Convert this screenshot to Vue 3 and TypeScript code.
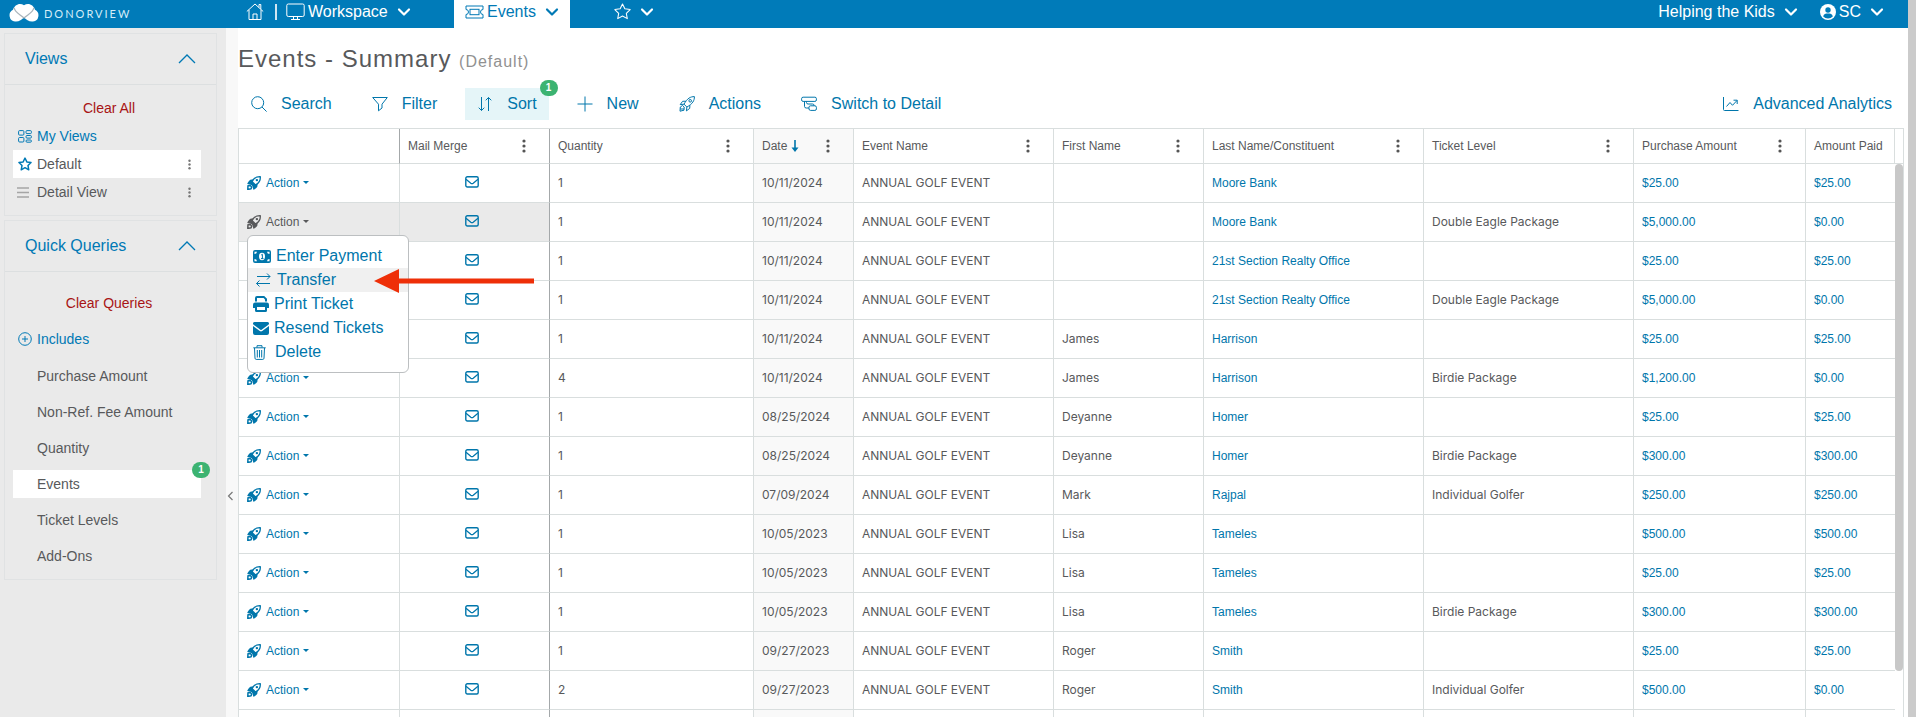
<script setup lang="ts">
import { ref } from 'vue'

interface Row {
  qty: number
  date: string
  first: string
  last: string
  level: string
  amount: string
  paid: string
}

const make = (
  qty: number, date: string, first: string, last: string, level: string, amount: string, paid: string,
): Row => ({ qty, date, first, last, level, amount, paid })

const rows: Row[] = [
  make(1, '10/11/2024', '', 'Moore Bank', '', '$25.00', '$25.00'),
  make(1, '10/11/2024', '', 'Moore Bank', 'Double Eagle Package', '$5,000.00', '$0.00'),
  make(1, '10/11/2024', '', '21st Section Realty Office', '', '$25.00', '$25.00'),
  make(1, '10/11/2024', '', '21st Section Realty Office', 'Double Eagle Package', '$5,000.00', '$0.00'),
  make(1, '10/11/2024', 'James', 'Harrison', '', '$25.00', '$25.00'),
  make(4, '10/11/2024', 'James', 'Harrison', 'Birdie Package', '$1,200.00', '$0.00'),
  make(1, '08/25/2024', 'Deyanne', 'Homer', '', '$25.00', '$25.00'),
  make(1, '08/25/2024', 'Deyanne', 'Homer', 'Birdie Package', '$300.00', '$300.00'),
  make(1, '07/09/2024', 'Mark', 'Rajpal', 'Individual Golfer', '$250.00', '$250.00'),
  make(1, '10/05/2023', 'Lisa', 'Tameles', '', '$500.00', '$500.00'),
  make(1, '10/05/2023', 'Lisa', 'Tameles', '', '$25.00', '$25.00'),
  make(1, '10/05/2023', 'Lisa', 'Tameles', 'Birdie Package', '$300.00', '$300.00'),
  make(1, '09/27/2023', 'Roger', 'Smith', '', '$25.00', '$25.00'),
  make(2, '09/27/2023', 'Roger', 'Smith', 'Individual Golfer', '$500.00', '$0.00'),
]

const openRow = ref(1)
const queries = ['Purchase Amount', 'Non-Ref. Fee Amount', 'Quantity', 'Events', 'Ticket Levels', 'Add-Ons']
const activeQuery = ref('Events')
</script>

<template>
  <div class="shell">
    <svg class="defs" aria-hidden="true">
      <symbol id="chev" viewBox="0 0 14 14"><path d="M2 4.5l5 5 5-5" fill="none" stroke="currentColor" stroke-width="2.2" stroke-linecap="round" stroke-linejoin="round" /></symbol>
      <symbol id="rocket" viewBox="0 0 16 16">
        <path d="M15.2.8C11.5.6 8.500 2 6.400 5.200L5.300 8.200l2.600 2.600 3-1.200C14.200 7.400 15.500 4.500 15.200.8z" fill="none" stroke="currentColor" stroke-width="1.500" stroke-linejoin="round" />
        <circle cx="11.300" cy="4.700" r="1.400" fill="currentColor" />
        <path d="M7.500 3.800 3.800 4.200C2.500 5 1 7.200.2 9l5.300 1.300z M12.200 8.500l-.4 3.700c-.8 1.300-2.600 2.800-4.600 3.600l-1.200-5.300z" fill="currentColor" />
        <path d="M6.500 6 10 9.500 7 12.200 4 9z" fill="currentColor" />
        <path d="M1.100 11.200 3.800 10.900l1.500 1.600-.6 2.100-3.800.8z" fill="none" stroke="currentColor" stroke-width="1.700" stroke-linejoin="round" />
      </symbol>
      <symbol id="mail" viewBox="0 0 14 12">
        <rect x=".8" y=".8" width="12.400" height="10.200" rx="1.500" fill="none" stroke="currentColor" stroke-width="1.400" />
        <path d="M1 3.300l4.800 3.900c.7.500 1.700.5 2.400 0L13 3.300" fill="none" stroke="currentColor" stroke-width="1.300" />
      </symbol>
      <symbol id="dots" viewBox="0 0 4 14"><circle cx="2" cy="2" r="1.600" /><circle cx="2" cy="7" r="1.600" /><circle cx="2" cy="12" r="1.600" /></symbol>
      <symbol id="star" viewBox="0 0 16 16"><path d="M8 .9l2.200 4.600 5 .7-3.600 3.500.9 5L8 12.300l-4.500 2.400.9-5L.8 6.200l5-.7z" fill="none" stroke="currentColor" stroke-linejoin="round" /></symbol>
    </svg>

    <header class="topbar">
      <a class="brand" href="#" aria-label="DonorView">
        <svg width="32" height="19" viewBox="0 0 32 19">
          <path d="M7 18.500A6.200 6.200 0 0 1 5 6.800C6.500 1.500 12 -.8 16 2.300c4-3.100 9.500-.8 11 4.500a6.200 6.200 0 0 1-2 11.700c-4 .4-6.500-1.500-9-4.200-2.500 2.700-5 4.600-9 4.200z" fill="#fff" />
          <path d="M6.200 4.800c.3 4.200 5.300 6.400 9.800 10.200 4.500-3.800 9.500-6 9.800-10.200" fill="none" stroke="#a9b4bb" stroke-width="1.300" />
        </svg>
        <span class="wordmark">DONORVIEW</span>
      </a>
      <nav class="mainnav">
        <a class="home" href="#" aria-label="Home">
          <svg width="18" height="18" viewBox="0 0 18 18" fill="none" stroke="currentColor"><path d="M.8 8.500 9 1l8.200 7.500M3 6.800V16.500h12V6.800M13 4.500V1.500h1.800v4.700M7 16.500V11h4v5.500" /></svg>
        </a>
        <span class="divider"></span>
        <button class="navbtn workspace" type="button">
          <svg width="19" height="18" viewBox="0 0 19 18" fill="none" stroke="currentColor"><rect x=".8" y="1" width="17.400" height="12.500" rx="1.500" /><path d="M7.500 13.500v3M11.500 13.500v3M5 16.500h9" /></svg>
          Workspace
          <svg class="chev" width="14" height="14"><use href="#chev" /></svg>
        </button>
        <button class="navbtn tab" type="button">
          <svg width="19" height="14" viewBox="0 0 19 14" fill="none" stroke="currentColor"><path d="M1 1h17v3.500a2.500 2.500 0 0 0 0 5V13H1V9.500a2.500 2.500 0 0 0 0-5z" stroke-linejoin="round" /><rect x="5" y="4.300" width="9" height="5.400" /></svg>
          Events
          <svg class="chev" width="14" height="14"><use href="#chev" /></svg>
        </button>
        <button class="navbtn fav" type="button" aria-label="Favorites">
          <svg width="17" height="17"><use href="#star" /></svg>
          <svg class="chev" width="14" height="14"><use href="#chev" /></svg>
        </button>
      </nav>
      <div class="account">
        <button class="navbtn" type="button">Helping the Kids<svg class="chev" width="14" height="14"><use href="#chev" /></svg></button>
        <button class="navbtn user" type="button">
          <svg width="16" height="16" viewBox="0 0 16 16"><circle cx="8" cy="8" r="8" fill="#fff" /><circle cx="8" cy="6" r="2.700" fill="#007bb9" /><path d="M3.200 12.400c.5-2 2-2.900 3.300-2.900h3c1.300 0 2.800.9 3.300 2.900A6.500 6.500 0 0 1 8 14.500a6.500 6.500 0 0 1-4.800-2.100z" fill="#007bb9" /></svg>
          SC
          <svg class="chev" width="14" height="14"><use href="#chev" /></svg>
        </button>
      </div>
    </header>

    <div class="body">
      <aside class="sidebar">
        <section class="card">
          <button class="cardhead" type="button">Views
            <svg width="18" height="10" viewBox="0 0 18 10"><path d="M1 9l8-8 8 8" fill="none" stroke="currentColor" stroke-width="1.300" /></svg>
          </button>
          <div class="views">
            <a class="clear" href="#">Clear All</a>
            <a class="side link" href="#">
              <svg width="14" height="13" viewBox="0 0 14 13" fill="none" stroke="currentColor"><rect x=".6" y=".6" width="5.300" height="4.500" rx="1" /><rect x="8" y=".6" width="5.400" height="3" rx="1" /><rect x=".6" y="7.500" width="5.300" height="4.500" rx="1" /><rect x="8" y="5.500" width="5.400" height="2.600" rx="1" /><rect x="8" y="10" width="5.400" height="2.200" rx="1" /></svg>
              My Views
            </a>
            <div class="side on">
              <svg class="blue" width="14" height="14" viewBox="0 0 16 16"><path d="M8 1.200l2.100 4.400 4.800.7-3.500 3.400.9 4.900L8 12.200l-4.300 2.400.9-4.900L1.100 6.300l4.800-.7z" fill="none" stroke="currentColor" stroke-width="1.700" stroke-linejoin="round" /></svg>
              <a href="#">Default</a>
              <button class="more" type="button" aria-label="Default options"><svg width="3" height="11"><use href="#dots" /></svg></button>
            </div>
            <div class="side">
              <svg class="bars" width="12" height="11" viewBox="0 0 12 11" stroke="#a5a5a5" stroke-width="1.500"><path d="M0 1h12M0 5.500h12M0 10h12" /></svg>
              <a href="#">Detail View</a>
              <button class="more" type="button" aria-label="Detail View options"><svg width="3" height="11"><use href="#dots" /></svg></button>
            </div>
          </div>
        </section>
        <section class="card">
          <button class="cardhead" type="button">Quick Queries
            <svg width="18" height="10" viewBox="0 0 18 10"><path d="M1 9l8-8 8 8" fill="none" stroke="currentColor" stroke-width="1.300" /></svg>
          </button>
          <div class="queries">
            <a class="clear" href="#">Clear Queries</a>
            <a class="side link" href="#">
              <svg width="14" height="14" viewBox="0 0 14 14" fill="none" stroke="currentColor"><circle cx="7" cy="7" r="6.300" /><path d="M7 4v6M4 7h6" /></svg>
              Includes
            </a>
            <ul>
              <li v-for="q in queries" :key="q" class="side" :class="{ on: q === activeQuery }">
                <a href="#" @click.prevent="activeQuery = q">{{ q }}</a>
                <span v-if="q === 'Events'" class="badge">1</span>
              </li>
            </ul>
          </div>
        </section>
      </aside>

      <button class="gutter" type="button" aria-label="Collapse sidebar">
        <svg width="7" height="10" viewBox="0 0 7 10"><path d="M5.500 1l-4 4 4 4" fill="none" stroke="#777" stroke-width="1.200" /></svg>
      </button>

      <main>
        <h1>Events - Summary <small>(Default)</small></h1>
        <div class="toolbar">
          <button type="button"><svg width="16" height="16" viewBox="0 0 16 16" fill="none" stroke="currentColor"><circle cx="6.700" cy="6.700" r="6" /><path d="M11 11l4.600 4.600" /></svg>Search</button>
          <button type="button"><svg width="16" height="16" viewBox="0 0 16 16" fill="none" stroke="currentColor" stroke-linejoin="round"><path d="M.7 1.500h14.600L10 8.200v3.800L6.500 14.800V8.200z" /></svg>Filter</button>
          <button class="sorted" type="button"><svg width="16" height="16" viewBox="0 0 16 16" fill="none" stroke="currentColor"><path d="M4.500 1v13.500M1.700 11.700l2.800 2.800 2.800-2.800M11.500 15V1.500M8.700 4.300l2.800-2.800 2.800 2.800" /></svg>Sort<span class="badge">1</span></button>
          <button type="button"><svg width="16" height="16" viewBox="0 0 16 16" fill="none" stroke="currentColor"><path d="M8 .5v15M.5 8h15" /></svg>New</button>
          <button type="button"><svg width="16" height="16" viewBox="0 0 16 16" fill="none" stroke="currentColor" stroke-linejoin="round"><path d="M15.400.6C11.500.6 8.300 2.200 5 8.200L7.900 11C13.700 7.800 15.500 4.500 15.400.6zM6.800 5.200 3.600 5.300 1.200 8.600 5 8.200M10.900 9.200l-.2 3.200-3.300 2.500L7.900 11" /><circle cx="11.200" cy="4.800" r="1.300" /><path d="M3.500 9.500 5.200 11 5 14.200 1 15.200 1.300 11zM1.200 13H5" /></svg>Actions</button>
          <button type="button"><svg width="16" height="16" viewBox="0 0 16 16" fill="none" stroke="currentColor"><rect x=".6" y="1.200" width="14.800" height="4.200" rx="1.500" /><rect x="8" y="9.800" width="7.400" height="4.600" rx="1.500" /><path d="M3.500 5.400v5A1.700 1.700 0 0 0 5.200 12H8M5.500 5.400v1.200A1.500 1.500 0 0 0 7 8h4.500a1.500 1.500 0 0 1 1.500 1.800" /></svg>Switch to Detail</button>
          <button class="analytics" type="button"><svg width="16" height="16" viewBox="0 0 16 16" fill="none" stroke="currentColor"><path d="M.5 1v12.500a1 1 0 0 0 1 1h14M3.500 10.500 7 6.500l2.500 2.800L14 4.500M10.500 4.200H14.200V8" /></svg>Advanced Analytics</button>
        </div>

        <div class="grid">
          <table>
            <colgroup>
              <col class="w-action"><col class="w-mail"><col class="w-qty"><col class="w-date"><col class="w-event"><col class="w-first"><col class="w-last"><col class="w-level"><col class="w-amount"><col><col class="w-bar">
            </colgroup>
            <thead>
              <tr>
                <th class="dark" aria-label="Action"></th>
                <th class="dark"><div>Mail Merge<svg class="hd"><use href="#dots" /></svg></div></th>
                <th><div>Quantity<svg class="hd"><use href="#dots" /></svg></div></th>
                <th class="date"><div>Date<svg class="down" width="8" height="12" viewBox="0 0 8 12"><path d="M3.200 0h1.600v7.500H7.500L4 12 .5 7.500h2.700z" fill="currentColor" /></svg><svg class="hd"><use href="#dots" /></svg></div></th>
                <th><div>Event Name<svg class="hd"><use href="#dots" /></svg></div></th>
                <th><div>First Name<svg class="hd"><use href="#dots" /></svg></div></th>
                <th><div>Last Name/Constituent<svg class="hd"><use href="#dots" /></svg></div></th>
                <th><div>Ticket Level<svg class="hd"><use href="#dots" /></svg></div></th>
                <th><div>Purchase Amount<svg class="hd"><use href="#dots" /></svg></div></th>
                <th><div>Amount Paid</div></th>
                <th class="bar" aria-hidden="true"></th>
              </tr>
            </thead>
            <tbody>
              <tr v-for="(r, i) in rows" :key="i" :class="{ open: openRow === i }">
                <td class="act">
                  <button class="action" type="button" @click="openRow = openRow === i ? -1 : i">
                    <svg width="14" height="14"><use href="#rocket" /></svg>Action<i></i>
                  </button>
                  <div v-if="openRow === i" class="menu">
                    <button type="button"><svg width="18" height="13" viewBox="0 0 18 13"><rect width="18" height="13" rx="2" fill="currentColor" /><ellipse cx="9" cy="6.500" rx="3" ry="3.700" fill="#fff" /><path d="M8.200 5 9.400 4.300V8.500M8 8.600h2.500" fill="none" stroke="currentColor" /><path d="M1.500 4V1.800H4A2.500 2.500 0 0 1 1.500 4zM16.500 4V1.800H14A2.500 2.500 0 0 0 16.500 4zM1.500 9v2.200H4A2.500 2.500 0 0 0 1.500 9zM16.500 9v2.200H14A2.500 2.500 0 0 1 16.500 9z" fill="#fff" /></svg>Enter Payment</button>
                    <button class="hover" type="button"><svg width="20" height="14" viewBox="0 0 20 14" fill="none" stroke="currentColor"><path d="M4 3.500h13M14 .5l3 3-3 3M17 10.500H3.500M6.500 7.500l-3 3 3 3" /></svg>Transfer</button>
                    <button type="button"><svg width="16" height="16" viewBox="0 0 16 16"><path d="M2 5.500V2a2 2 0 0 1 2-2h7.200L14 2.800v2.700h-2V3.400L10.600 2H4v3.500zM2.200 6.500h11.600A2.200 2.200 0 0 1 16 8.700V12h-2v2.500a1.500 1.500 0 0 1-1.500 1.500h-9A1.500 1.500 0 0 1 2 14.500V12H0V8.700a2.200 2.200 0 0 1 2.200-2.200zM4 11v3h8v-3z" fill="currentColor" fill-rule="evenodd" /></svg>Print Ticket</button>
                    <button type="button"><svg width="16" height="13" viewBox="0 0 16 13"><path d="M1.500 0h13a1.500 1.500 0 0 1 .9 2.700L8.600 7.800a1 1 0 0 1-1.200 0L.6 2.700A1.500 1.500 0 0 1 1.500 0zM0 4l6.800 5.100a2 2 0 0 0 2.400 0L16 4v7a2 2 0 0 1-2 2H2a2 2 0 0 1-2-2z" fill="currentColor" /></svg>Resend Tickets</button>
                    <button type="button"><svg class="bin" width="13" height="15" viewBox="0 0 13 15" fill="none" stroke="currentColor"><path d="M.3 2.800h12.400M4 2.500V.7h5v1.800M1.500 3l.5 10.200c0 .7.500 1.200 1.200 1.200h6.600c.7 0 1.200-.5 1.200-1.200L11.500 3M4.300 5v7.500M6.500 5v7.500M8.700 5v7.500" /></svg>Delete</button>
                    <svg class="pointer" width="160" height="24" viewBox="0 0 160 24" aria-hidden="true"><path d="M0 12 25 0V9.500H160v5H25V24z" fill="#ee2f08" /></svg>
                  </div>
                </td>
                <td class="mail"><a href="#" aria-label="Mail merge"><svg width="14" height="12"><use href="#mail" /></svg></a></td>
                <td>{{ r.qty }}</td>
                <td class="date">{{ r.date }}</td>
                <td>ANNUAL GOLF EVENT</td>
                <td>{{ r.first }}</td>
                <td><a href="#">{{ r.last }}</a></td>
                <td>{{ r.level }}</td>
                <td><a href="#">{{ r.amount }}</a></td>
                <td><a href="#">{{ r.paid }}</a></td>
                <td class="bar"></td>
              </tr>
              <tr aria-hidden="true"><td></td><td class="mail"></td><td></td><td class="date"></td><td></td><td></td><td></td><td></td><td></td><td></td><td class="bar"></td></tr>
            </tbody>
          </table>
          <div class="thumb"></div>
        </div>
      </main>
    </div>
    <div class="pagebar"></div>
  </div>
</template>

<style>
body { margin: 0; overflow: hidden; }
</style>

<style scoped>
.shell {
  --blue: #0079b5;
  --link: #0076ab;
  --line: #d9dede;
  position: relative;
  height: 100vh;
  padding-right: 8px;
  display: flex;
  flex-direction: column;
  overflow: hidden;
  background: #fff;
  color: #58595b;
  font: 14px "Liberation Sans", Arial, sans-serif;
}
.shell *, .shell { box-sizing: border-box; }
.defs { position: absolute; width: 0; height: 0; }
button { font: inherit; color: inherit; background: none; border: 0; padding: 0; margin: 0; cursor: pointer; text-align: left; }
a { color: inherit; text-decoration: none; }
svg { flex: none; display: block; }
.pagebar { position: absolute; top: 0; right: 0; bottom: 0; width: 8px; background: #cbcbcb; }

.topbar { flex: none; display: flex; height: 28px; background: #007bb9; color: #fff; font-size: 16px; }
.brand { display: flex; align-items: center; gap: 4px; width: 246px; padding: 0 0 4px 8px; }
.wordmark { font: 11px Lato, sans-serif; letter-spacing: 2px; color: #d5edf8; padding-top: 2px; }
.mainnav { display: flex; }
.home { display: flex; align-items: center; width: 29px; padding-bottom: 4px; }
.divider { width: 2px; height: 16px; margin: 4px 9px 0 0; background: #cfe6f2; }
.navbtn { display: flex; align-items: center; gap: 3px; padding-bottom: 5px; }
.chev { margin-left: 6px; }
.workspace { width: 168px; }
.tab { width: 116px; padding-left: 11px; background: #fff; color: var(--blue); }
.fav { margin-left: 44px; }
.account { display: flex; gap: 22px; margin-left: auto; padding-right: 24px; }

.body { flex: 1; display: flex; min-height: 0; }
.sidebar { flex: none; width: 226px; padding: 5px 9px 0 4px; background: #eaeaea; }
.card { border: 1px solid #e0e2e3; margin-bottom: 4px; }
.cardhead { display: flex; align-items: center; justify-content: space-between; width: 100%; height: 51px; padding: 0 20px; border-bottom: 1px solid #dcdfe0; color: var(--blue); font-size: 16px; }
.views { padding: 9px 0; }
.queries { display: flex; flex-direction: column; gap: 8px; padding: 17px 0 9px; }
.clear { display: block; line-height: 28px; text-align: center; color: #a81414; padding-right: 3px; }
.side { position: relative; display: flex; align-items: center; height: 28px; margin: 0 15px 0 8px; padding-left: 24px; }
.side > svg { width: 14px; margin: 0 5px 0 -19px; }
.side > svg.bars { width: 12px; margin: 0 8px 0 -20px; }
.link, .blue { color: var(--blue); }
.on { background: #fff; }
.more { margin-left: auto; padding-right: 10px; }
.more svg { fill: #777; }
ul { list-style: none; margin: 1px 0 0; padding: 0; display: flex; flex-direction: column; gap: 8px; }
.badge { position: absolute; top: -8px; right: -9px; width: 18px; height: 16px; border-radius: 8px; background: #3cb371; color: #fff; font-size: 10px; font-weight: 700; line-height: 16px; text-align: center; }

.gutter { flex: none; display: flex; align-items: flex-start; width: 12px; padding: 463px 0 0 1px; background: #f8f8f8; }

main { flex: 1; min-width: 0; display: flex; flex-direction: column; padding-top: 17px; }
h1 { margin: 0 0 15px; font-size: 24px; line-height: 28px; font-weight: 400; letter-spacing: 1px; }
small { font-size: 16px; line-height: 16px; color: #919191; }
.toolbar { display: flex; gap: 16px; height: 32px; margin: 0 16px 8px 1px; flex: none; }
.toolbar button { position: relative; display: flex; align-items: center; gap: 14px; padding: 0 12px; color: var(--link); font-size: 16px; }
.toolbar .sorted { background: #e5f5f8; }
.toolbar .analytics { margin-left: auto; padding-right: 0; }

.grid { position: relative; flex: 1; min-height: 0; margin-right: 4px; overflow: hidden; border: 1px solid var(--line); border-bottom: 0; }
table { width: 100%; table-layout: fixed; border-collapse: separate; border-spacing: 0; font-size: 12px; }
.w-action { width: 161px; }
.w-mail, .w-first { width: 150px; }
.w-qty { width: 204px; }
.w-date { width: 100px; }
.w-event { width: 200px; }
.w-last { width: 220px; }
.w-level { width: 210px; }
.w-amount { width: 172px; }
.w-bar { width: 8px; }
th, td { padding: 0 0 0 8px; border-right: 1px solid var(--line); border-bottom: 1px solid var(--line); text-align: left; white-space: nowrap; }
th { height: 35px; font-weight: 400; }
th.dark, td.mail { border-right-color: #a4a8aa; }
th > div { display: flex; align-items: center; }
.hd { width: 4px; height: 14px; margin-left: auto; margin-right: 23px; fill: #555; }
.down { margin-left: 4px; color: var(--link); }
td { height: 39px; padding-bottom: 2px; font-family: Inter, "Liberation Sans", sans-serif; }
td a, td button { color: var(--link); font-family: "Liberation Sans", Arial, sans-serif; }
.date { background: #f9f9f9; }
.bar { border-right: 0; padding: 0; }
td.bar { border-bottom: 0; }
td:nth-last-child(2) { border-right: 0; }
td.mail a { display: flex; justify-content: center; padding-right: 13px; }
.act { position: relative; padding-bottom: 0; }
.action { display: flex; align-items: center; gap: 5px; }
.action i { width: 0; border: 3px solid transparent; border-top-color: currentColor; border-bottom: 0; margin: 0 0 2px -1px; }
.open .act, .open .mail { background: #eaeaea; }
.open .action { color: #58595b; }

.menu { position: absolute; z-index: 2; top: 32px; left: 8px; width: 162px; padding: 8px 0; border: 1px solid #bcbfc1; border-radius: 6px; background: #fff; font-size: 16px; }
.menu button { display: flex; align-items: center; gap: 5px; width: 100%; height: 24px; padding-left: 5px; }
.menu .hover { gap: 4px; background: #f0f0f0; }
.bin { margin-right: 4px; }
.pointer { position: absolute; top: 33px; left: 126px; }
.thumb { position: absolute; top: 35px; right: 0; width: 8px; height: 507px; border-radius: 4px; background: #c8c8c8; }
</style>
